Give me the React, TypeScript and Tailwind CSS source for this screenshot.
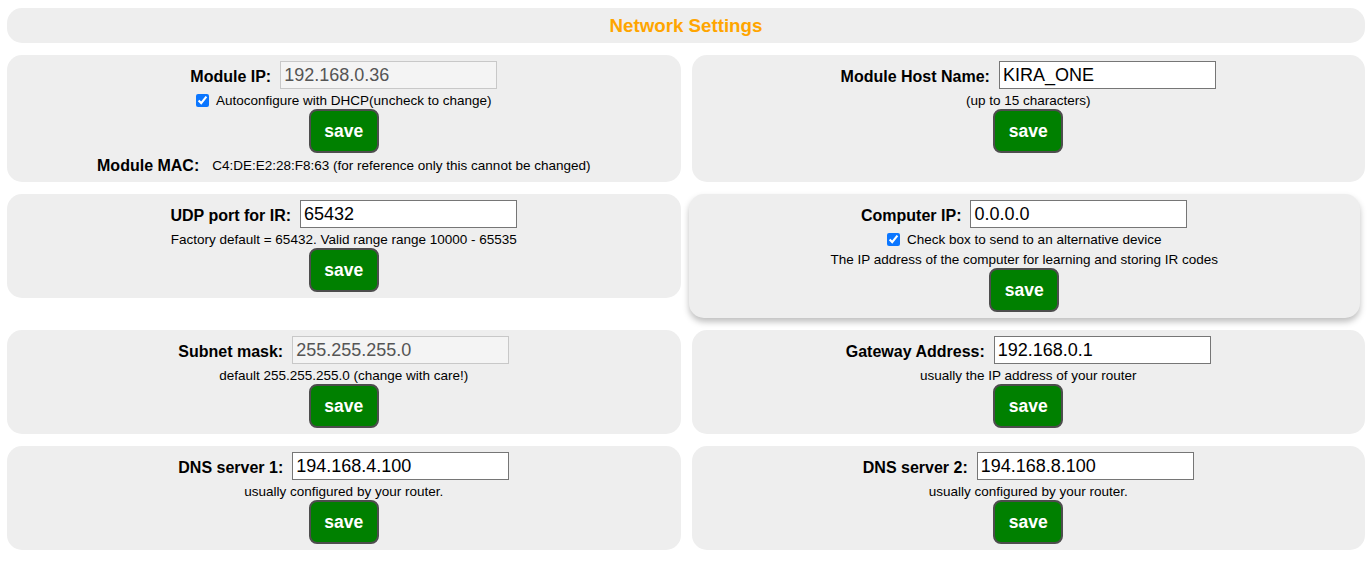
import React from 'react'

const FONT = { fontFamily: '"Liberation Sans", Arial, Helvetica, sans-serif' }

function SaveButton() {
  return (
    <button
      type="button"
      className="h-[44px] w-[70px] shrink-0 rounded-[8px] border-2 border-[#4d4d4d] bg-[#008000] text-[17.5px] font-bold text-white"
    >
      save
    </button>
  )
}

function Field({ label, value, disabled }: { label: string; value: string; disabled?: boolean }) {
  return (
    <div className="flex h-[28px] items-center gap-[9px]">
      <span className="pt-[3px] text-[16px] font-bold text-black">{label}</span>
      <input
        type="text"
        defaultValue={value}
        disabled={disabled}
        className={`h-[28px] w-[217px] border px-[3px] text-[18px] outline-none ${
          disabled ? 'border-[#c8c8c8] bg-[#f4f4f4] text-[#555]' : 'border-[#767676] bg-white text-black'
        }`}
      />
    </div>
  )
}

function Hint({ children }: { children: React.ReactNode }) {
  return <div className="flex h-[20px] items-end text-[13.5px] leading-[17px] text-black">{children}</div>
}

function Check({ children }: { children: React.ReactNode }) {
  return (
    <label className="flex h-[20px] items-end gap-[7px] text-[13.5px] leading-[17px] text-black">
      <input type="checkbox" defaultChecked className="m-0 mb-[2px] h-[13px] w-[13px] accent-[#0b76ff]" />
      {children}
    </label>
  )
}

function Card({ children, className = '' }: { children: React.ReactNode; className?: string }) {
  return (
    <div className={`flex flex-col items-center rounded-[15px] bg-[#eeeeee] pb-[6px] pt-[6px] ${className}`}>
      {children}
    </div>
  )
}

export default function App() {
  return (
    <div className="min-h-[561px] bg-white pl-[7px] pr-[3px] pt-[8px]" style={FONT}>
      <div className="flex h-[35px] items-center justify-center rounded-[15px] bg-[#eeeeee] pt-[2px]">
        <h3 className="text-[18.72px] font-bold text-[#ffa500]">Network Settings</h3>
      </div>

      <div className="mt-[12px] grid grid-cols-2 items-start gap-x-[11px] gap-y-[12px]">
        <Card>
          <Field label="Module IP:" value="192.168.0.36" disabled />
          <Check>Autoconfigure with DHCP(uncheck to change)</Check>
          <SaveButton />
          <div className="flex h-[23px] items-end gap-[13px] pb-[1px]">
            <span className="text-[16px] font-bold leading-[18px]">Module MAC:</span>
            <span className="pb-[1px] text-[13.5px] leading-[16px]">
              C4:DE:E2:28:F8:63 (for reference only this cannot be changed)
            </span>
          </div>
        </Card>
        <Card className="self-stretch">
          <Field label="Module Host Name:" value="KIRA_ONE" />
          <Hint>(up to 15 characters)</Hint>
          <SaveButton />
        </Card>

        <Card>
          <Field label="UDP port for IR:" value="65432" />
          <Hint>Factory default = 65432. Valid range range 10000 - 65535</Hint>
          <SaveButton />
        </Card>
        <Card className="-ml-[3px] mr-[5px] shadow-[0_4px_6px_rgba(0,0,0,0.25)]">
          <Field label="Computer IP:" value="0.0.0.0" />
          <Check>Check box to send to an alternative device</Check>
          <Hint>The IP address of the computer for learning and storing IR codes</Hint>
          <SaveButton />
        </Card>

        <Card>
          <Field label="Subnet mask:" value="255.255.255.0" disabled />
          <Hint>default 255.255.255.0 (change with care!)</Hint>
          <SaveButton />
        </Card>
        <Card>
          <Field label="Gateway Address:" value="192.168.0.1" />
          <Hint>usually the IP address of your router</Hint>
          <SaveButton />
        </Card>

        <Card>
          <Field label="DNS server 1:" value="194.168.4.100" />
          <Hint>usually configured by your router.</Hint>
          <SaveButton />
        </Card>
        <Card>
          <Field label="DNS server 2:" value="194.168.8.100" />
          <Hint>usually configured by your router.</Hint>
          <SaveButton />
        </Card>
      </div>
    </div>
  )
}
